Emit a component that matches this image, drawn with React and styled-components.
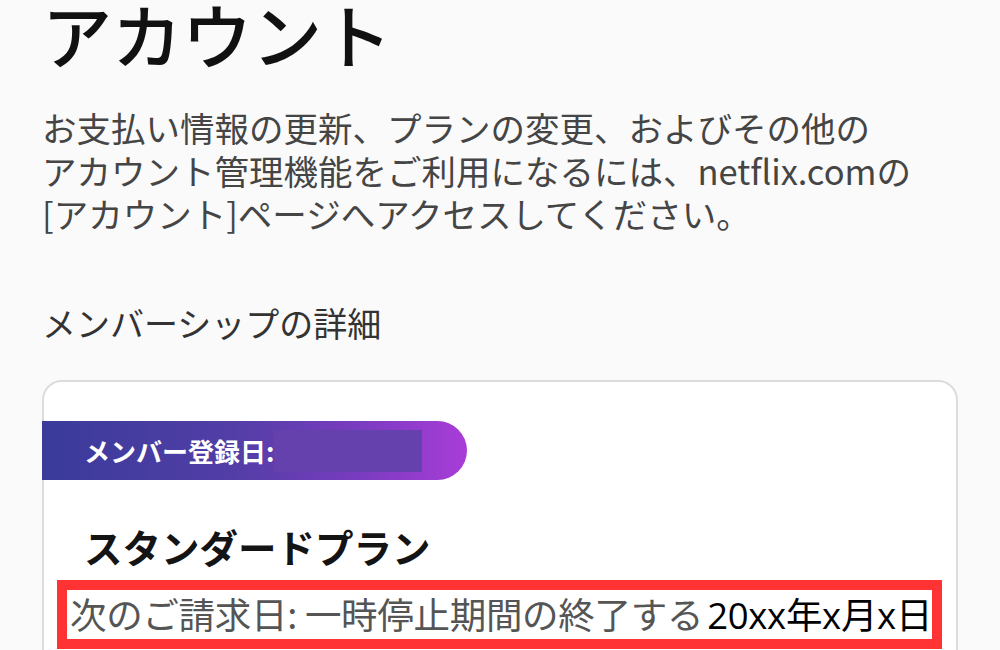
import styled, { createGlobalStyle } from 'styled-components';

const GlobalStyle = createGlobalStyle`
  html, body {
    margin: 0;
    padding: 0;
    background: #fafafa;
  }
  body {
    font-family: "Noto Sans CJK JP", "Noto Sans", sans-serif;
    overflow: hidden;
  }
`

const Page = styled.div`
  width: 1000px;
  height: 650px;
  overflow: hidden;
  padding: 0 42px;
  box-sizing: border-box;
`

const Title = styled.h1`
  margin: 0;
  font-size: 70px;
  line-height: 68px;
  font-weight: 500;
  color: #111;
`

const Lead = styled.p`
  margin: 38px 0 0;
  font-size: 34.5px;
  line-height: 43px;
  color: #454545;
`

const SectionLabel = styled.h2`
  margin: 66px 0 0;
  font-size: 34px;
  line-height: 44px;
  font-weight: 400;
  color: #333;
`

const Card = styled.div`
  margin-top: 35px;
  background: #fff;
  border: 2px solid #dcdcdc;
  border-radius: 20px;
  height: 320px;
  padding-top: 39px;
  box-sizing: border-box;
`

const Banner = styled.div`
  display: flex;
  align-items: center;
  width: 425px;
  height: 59px;
  margin-left: -2px;
  padding-left: 42px;
  box-sizing: border-box;
  border-radius: 0 30px 30px 0;
  background: linear-gradient(90deg, #3a3b9b 0%, #523ea6 45%, #7a3cc0 75%, #a93cd8 100%);
  color: #fff;
  font-size: 26px;
  font-weight: 700;
`

const Hidden = styled.span`
  display: inline-block;
  width: 148px;
  height: 42px;
  background: #6541ad;
`

const PlanBody = styled.div`
  padding: 40px 13px 0;
`

const PlanName = styled.h3`
  margin: 0 0 0 27px;
  font-size: 38.5px;
  line-height: 52px;
  font-weight: 700;
  color: #141414;
`

const Highlight = styled.div`
  margin-top: 8px;
  width: 885px;
  border: 10px solid #ff3333;
  box-sizing: border-box;
  padding: 0 3px;
`

const NextBilling = styled.p`
  margin: 0;
  font-size: 36.5px;
  line-height: 48px;
  color: #555;
  white-space: nowrap;
  letter-spacing: -0.3px;
`

const DateText = styled.span`
  color: #000;
  margin-left: 4px;
  font-family: "Open Sans", "Noto Sans CJK JP", sans-serif;
`

export default function App() {
  return (
    <Page>
      <GlobalStyle />
      <Title>アカウント</Title>
      <Lead>
        お支払い情報の更新、プランの変更、およびその他の<br />
        アカウント管理機能をご利用になるには、netflix.comの<br />
        [アカウント]ページへアクセスしてください。
      </Lead>
      <SectionLabel>メンバーシップの詳細</SectionLabel>
      <Card>
        <Banner>
          メンバー登録日:<Hidden />
        </Banner>
        <PlanBody>
          <PlanName>スタンダードプラン</PlanName>
          <Highlight>
            <NextBilling>
              次のご請求日: 一時停止期間の終了する<DateText>20xx年x月x日</DateText>
            </NextBilling>
          </Highlight>
        </PlanBody>
      </Card>
    </Page>
  );
}
